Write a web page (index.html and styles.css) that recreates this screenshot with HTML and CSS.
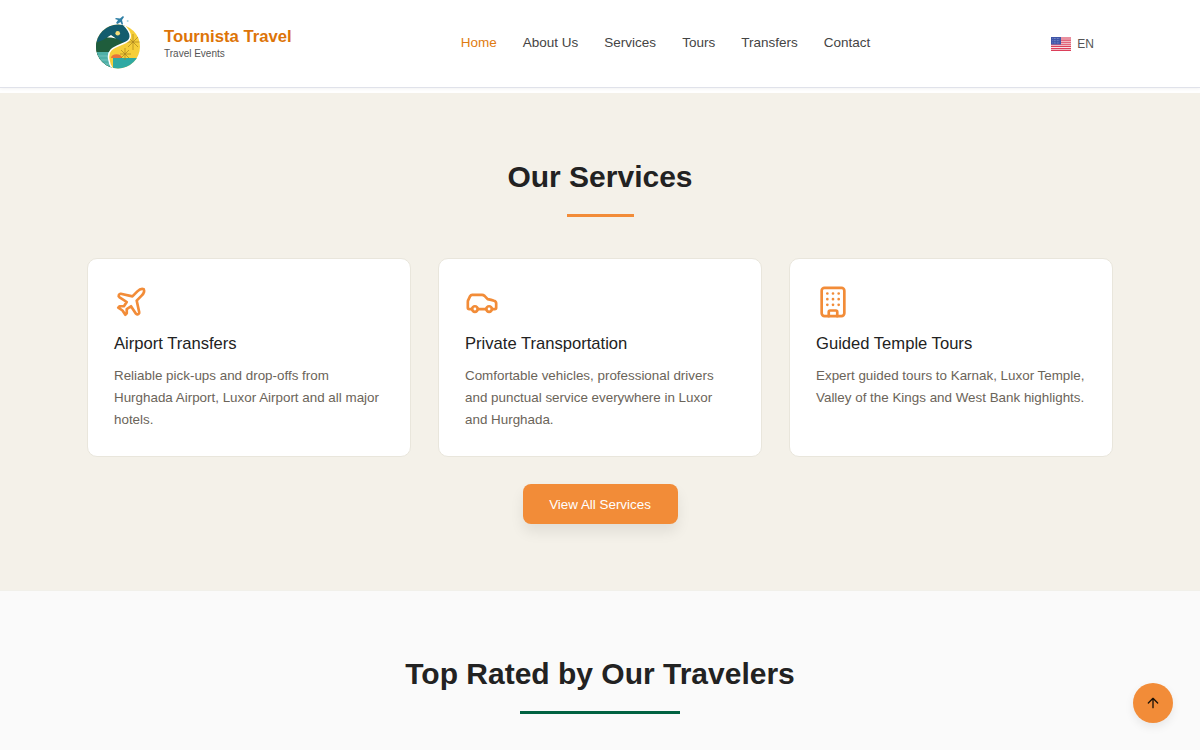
FILE: index.html
```html
<!DOCTYPE html>
<html>
<head>
    <title>Tournista Travel</title>
    <link rel="stylesheet" href="styles.css">
</head>
<body>
    <header class="site-header">
        <a class="brand" href="#">
            <svg class="brand-logo" viewBox="0 0 50 60" aria-hidden="true">
                <defs>
                    <clipPath id="logo-circle"><circle cx="25" cy="32.500" r="22"/></clipPath>
                    <clipPath id="logo-left"><path d="M30 10C36 16 39 22 36 26C33 30 23 31 18 36C14 40 15 48 20 56L-2 56L-2 10Z"/></clipPath>
                </defs>
                <path d="M23 9l2-3-3-1 1-1 4 .5 3-2.500 1 1-2 3 1 4-1 1-1.500-3-3 2z" fill="#2e7fa5"/>
                <circle cx="34.700" cy="7" r="1" fill="#a8d5e2"/>
                <g clip-path="url(#logo-circle)">
                    <rect y="8" width="50" height="50" fill="#f6cf3a"/>
                    <path d="M20 44h26v12H20z" fill="#2fa9a3"/>
                    <path d="M18 44a5 3.500 0 0 1 11 0z" fill="#e8743b"/>
                    <path d="M40 20v16M33 28h14M35 23l10 10M45 23l-10 10M32 34v12M27 40h11M28 36l8 8M36 36l-8 8" stroke="#a9831e" stroke-width="0.700"/>
                    <g clip-path="url(#logo-left)">
                        <rect y="8" width="50" height="50" fill="#125c6e"/>
                        <circle cx="24.700" cy="19.300" r="2.300" fill="#f3dd7a"/>
                        <path d="M0 30l10-4 8-5 6 4 6 3 10 2v30H0z" fill="#1f5d3c"/>
                        <path d="M14 23.500l4-2.500 5 3.500-5-1z" fill="#fff"/>
                        <rect y="38" width="22" height="20" fill="#4fb0a8"/>
                        <path d="M3 42h12M4 46h12M7 50h10" stroke="#8fd0ca" stroke-width="0.600"/>
                    </g>
                    <path d="M30 10C36 16 39 22 36 26C33 30 23 31 18 36C14 40 15 48 20 56" fill="none" stroke="#fff" stroke-width="1.500"/>
                </g>
            </svg>
            <span class="brand-text">
                <span class="brand-name">Tournista Travel</span>
                <span class="brand-tag">Travel Events</span>
            </span>
        </a>
        <nav class="main-nav">
            <a class="active" href="#">Home</a>
            <a href="#">About Us</a>
            <a href="#">Services</a>
            <a href="#">Tours</a>
            <a href="#">Transfers</a>
            <a href="#">Contact</a>
        </nav>
        <div class="lang">
            <svg class="flag" viewBox="0 0 20 14" aria-hidden="true">
                <rect width="20" height="14" fill="#f7e3e6"/>
                <path d="M0 1h20M0 3.100h20M0 5.200h20M0 7.300h20M0 9.400h20M0 11.500h20M0 13.400h20" stroke="#dc3f5a" stroke-width="1.100"/>
                <rect width="10" height="7.500" fill="#3f55a8"/>
                <path d="M1.500 1.500h7M1.500 3.700h7M1.500 5.900h7" stroke="#aab6e0" stroke-width="0.700" stroke-dasharray="0.700 0.800"/>
            </svg>
            <span>EN</span>
        </div>
    </header>

    <section class="services">
        <h2 class="section-title">Our Services</h2>
        <div class="title-bar"></div>
        <div class="card-grid">
            <article class="card">
                <svg class="card-icon" viewBox="0 0 24 24">
                    <path d="M17.800 19.200 16 11l3.500-3.500C21 6 21.500 4 21 3c-1-.5-3 0-4.500 1.500L13 8 4.800 6.200c-.5-.1-.9.1-1.100.5l-.3.5c-.2.5-.1 1 .3 1.300L9 12l-2 3H4l-1 1 3 2 2 3 1-1v-3l3-2 3.500 5.300c.3.400.8.500 1.300.3l.5-.2c.4-.3.6-.7.5-1.200z"/>
                </svg>
                <h3>Airport Transfers</h3>
                <p>Reliable pick-ups and drop-offs from Hurghada Airport, Luxor Airport and all major hotels.</p>
            </article>
            <article class="card">
                <svg class="card-icon" viewBox="0 0 24 24">
                    <path d="M19 17h2c.6 0 1-.4 1-1v-3c0-.9-.7-1.700-1.500-1.900C18.700 10.600 16 10 16 10s-1.300-1.400-2.200-2.300c-.5-.4-1.100-.7-1.800-.7H5c-.6 0-1.100.4-1.400.9l-1.400 2.900A3.700 3.700 0 0 0 2 12v4c0 .6.4 1 1 1h2"/>
                    <circle cx="7" cy="17" r="2"/>
                    <path d="M9 17h6"/>
                    <circle cx="17" cy="17" r="2"/>
                </svg>
                <h3>Private Transportation</h3>
                <p>Comfortable vehicles, professional drivers and punctual service everywhere in Luxor and Hurghada.</p>
            </article>
            <article class="card">
                <svg class="card-icon" viewBox="0 0 24 24">
                    <rect x="4" y="2" width="16" height="20" rx="2"/>
                    <path d="M9 22v-3a1 1 0 0 1 1-1h4a1 1 0 0 1 1 1v3"/>
                    <path d="M8 6h.01M12 6h.01M16 6h.01M8 10h.01M12 10h.01M16 10h.01M8 14h.01M12 14h.01M16 14h.01"/>
                </svg>
                <h3>Guided Temple Tours</h3>
                <p>Expert guided tours to Karnak, Luxor Temple, Valley of the Kings and West Bank highlights.</p>
            </article>
        </div>
        <div class="services-action">
            <a class="btn" href="#">View All Services</a>
        </div>
    </section>

    <section class="rated">
        <h2 class="section-title">Top Rated by Our Travelers</h2>
        <div class="title-bar green"></div>
    </section>

    <a class="to-top" href="#" aria-label="Back to top">
        <svg viewBox="0 0 24 24"><path d="m5 12 7-7 7 7M12 19V5"/></svg>
    </a>
</body>
</html>
```
FILE: styles.css
```css
* {
    box-sizing: border-box;
}

html, body {
    height: 100%;
    overflow: hidden;
}

body {
    margin: 0;
    font-family: "Liberation Sans", Arial, sans-serif;
    background-color: #fff;
    color: #222;
}

a {
    text-decoration: none;
    color: inherit;
}

.site-header {
    height: 88px;
    padding: 0 106px 0 93px;
    display: flex;
    align-items: center;
    justify-content: space-between;
    background-color: #fff;
    border-bottom: 1px solid #e0e2ea;
    box-shadow: 0 1px 3px rgba(0, 0, 0, 0.05);
    margin-bottom: 5px;
}

.brand {
    display: flex;
    align-items: center;
    gap: 21px;
}

.brand-logo {
    width: 50px;
    height: 60px;
}

.brand-text {
    display: flex;
    flex-direction: column;
}

.brand-name {
    font-size: 16.700px;
    font-weight: bold;
    color: #dd7408;
    line-height: 19px;
}

.brand-tag {
    font-size: 10px;
    color: #555;
    line-height: 15px;
}

.main-nav {
    display: flex;
    gap: 26px;
    font-size: 13.500px;
    color: #444;
    margin: -2px 0 0 -12px;
}

.main-nav .active {
    color: #e07b10;
}

.lang {
    display: flex;
    align-items: center;
    gap: 6px;
    font-size: 12px;
    color: #555;
}

.flag {
    width: 20px;
    height: 14px;
}

.services {
    height: 497px;
    padding-top: 65px;
    background-color: #f4f1e9;
}

.section-title {
    margin: 0;
    font-size: 30px;
    line-height: 38px;
    font-weight: bold;
    text-align: center;
    color: #222;
}

.title-bar {
    width: 67px;
    height: 3px;
    margin: 18px auto 0;
    background-color: #f28c38;
}

.title-bar.green {
    width: 160px;
    background-color: #006241;
}

.card-grid {
    display: grid;
    grid-template-columns: repeat(3, 324px);
    gap: 27px;
    justify-content: center;
    margin-top: 41px;
}

.card {
    height: 199px;
    padding: 26px;
    background-color: #fff;
    border: 1px solid #e9e6dc;
    border-radius: 10px;
}

.card-icon {
    display: block;
    width: 34px;
    height: 34px;
    fill: none;
    stroke: #f28c38;
    stroke-width: 1.900;
    stroke-linecap: round;
    stroke-linejoin: round;
}

.card h3 {
    margin: 15px 0 0;
    font-size: 16.600px;
    line-height: 20px;
    font-weight: normal;
    color: #222;
}

.card p {
    margin: 11px 0 0;
    font-size: 13.400px;
    line-height: 22px;
    color: #6b6459;
}

.services-action {
    display: flex;
    justify-content: center;
    margin-top: 27px;
}

.btn {
    width: 155px;
    height: 40px;
    display: flex;
    align-items: center;
    justify-content: center;
    font-size: 13.400px;
    color: #fff;
    background-color: #f28c38;
    border-radius: 8px;
    box-shadow: 0 8px 14px rgba(0, 0, 0, 0.08);
}

.rated {
    height: 160px;
    padding-top: 64px;
    background-color: #fafafa;
    border-top: 1px solid #f1f0ea;
}

.to-top {
    position: fixed;
    right: 27px;
    bottom: 27px;
    width: 40px;
    height: 40px;
    display: flex;
    align-items: center;
    justify-content: center;
    background-color: #f28c38;
    border-radius: 50%;
    box-shadow: 0 4px 10px rgba(0, 0, 0, 0.08);
}

.to-top svg {
    width: 16px;
    height: 16px;
    fill: none;
    stroke: #1c1208;
    stroke-width: 2;
    stroke-linecap: round;
    stroke-linejoin: round;
}
```
